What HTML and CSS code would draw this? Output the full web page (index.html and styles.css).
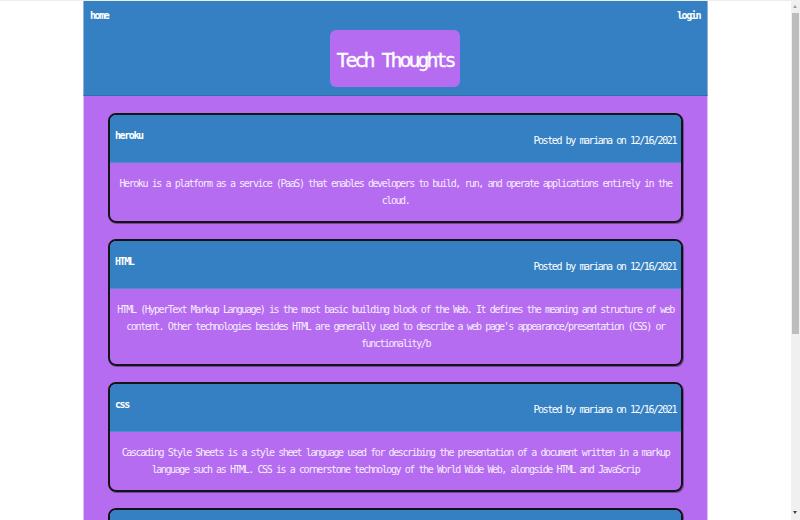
FILE: index.html
```html
<!DOCTYPE html>
<html lang="en">
<head>
<meta charset="utf-8">
<title>Tech Thoughts</title>
<link rel="stylesheet" href="styles.css">
</head>
<body>
<div class="page">
  <div class="container">
    <header class="site-header">
      <nav class="nav">
        <a class="nav-link" href="#">home</a>
        <a class="nav-link" href="#">login</a>
      </nav>
      <h1 class="site-title">Tech Thoughts</h1>
    </header>
    <main class="posts">
      <article class="post">
        <div class="post-head">
          <h2 class="post-title">heroku</h2>
          <p class="post-meta">Posted by mariana on 12/16/2021</p>
        </div>
        <p class="post-body">Heroku is a platform as a service (PaaS) that enables developers to build, run, and operate applications entirely in the cloud.</p>
      </article>
      <article class="post">
        <div class="post-head">
          <h2 class="post-title">HTML</h2>
          <p class="post-meta">Posted by mariana on 12/16/2021</p>
        </div>
        <p class="post-body">HTML (HyperText Markup Language) is the most basic building block of the Web. It defines the meaning and structure of web content. Other technologies besides HTML are generally used to describe a web page's appearance/presentation (CSS) or functionality/b</p>
      </article>
      <article class="post">
        <div class="post-head">
          <h2 class="post-title">css</h2>
          <p class="post-meta">Posted by mariana on 12/16/2021</p>
        </div>
        <p class="post-body">Cascading Style Sheets is a style sheet language used for describing the presentation of a document written in a markup language such as HTML. CSS is a cornerstone technology of the World Wide Web, alongside HTML and JavaScrip</p>
      </article>
      <article class="post">
        <div class="post-head">
          <h2 class="post-title">javascript</h2>
          <p class="post-meta">Posted by mariana on 12/16/2021</p>
        </div>
        <p class="post-body">JavaScript is a programming language that is one of the core technologies of the World Wide Web, alongside HTML and CSS.</p>
      </article>
    </main>
  </div>
</div>
<div class="scrollbar">
  <span class="arrow arrow-up"></span>
  <span class="thumb"></span>
  <span class="arrow arrow-down"></span>
</div>
</body>
</html>
```
FILE: styles.css
```css
html, body {
  margin: 0;
  padding: 0;
  height: 100%;
  overflow: hidden;
  background: #ffffff;
}

body {
  font-family: "DejaVu Sans Mono", "Liberation Mono", monospace;
  font-size: 10px;
  letter-spacing: -1.42px;
  color: #ffffff;
}

.page {
  width: 791px;
  border-top: 1px solid #ededed;
}

.container {
  width: 625px;
  margin: 0 auto;
}

.site-header {
  background: #3580c3;
  padding: 0 7px 8px 6px;
  border-bottom: 1px solid #2f6faa;
  border-left: 1px solid #8fb4dc;
  border-right: 1px solid #8fb4dc;
  text-align: center;
}

.nav {
  display: flex;
  justify-content: space-between;
  align-items: center;
  height: 28px;
}

.nav-link {
  color: #ffffff;
  text-decoration: none;
  font-weight: bold;
}

.site-title {
  display: inline-block;
  margin: 1px 0 0;
  padding: 2px 6px 0 6px;
  height: 55px;
  line-height: 57px;
  background: #b56cf0;
  border-radius: 6px;
  font-size: 20px;
  font-weight: normal;
  letter-spacing: -3.04px;
  color: #ffffff;
  -webkit-text-stroke: 0.3px #ffffff;
}

.posts {
  background: #b56cf0;
  padding: 17px 24px 40px;
  border-left: 1px solid #dcc0f8;
  border-right: 1px solid #dcc0f8;
  min-height: 600px;
}

.post {
  border: 2px solid #141414;
  border-radius: 8px;
  overflow: hidden;
  margin-bottom: 16px;
  box-shadow: 1px 1px 0 rgba(0, 0, 0, 0.35);
}

.post-head {
  display: flex;
  justify-content: space-between;
  align-items: flex-start;
  height: 48px;
  padding: 0 5px;
  background: #3580c3;
  border-bottom: 1px solid #4d8fd0;
  box-sizing: border-box;
}

.post-title {
  margin: 14px 0 0;
  font-size: 10px;
  line-height: 13px;
  font-weight: bold;
}

.post-meta {
  margin: 19px 0 0;
  line-height: 13px;
}

.post-body {
  margin: 0;
  padding: 12px 5px;
  line-height: 17px;
  text-align: center;
  color: #f6ecff;
}

.scrollbar {
  position: fixed;
  top: 0;
  right: 0;
  width: 9px;
  height: 100%;
  background: #f0f0f0;
}

.thumb {
  position: absolute;
  top: 13px;
  left: 1px;
  width: 7px;
  height: 321px;
  background: #bdbdbd;
}

.arrow {
  position: absolute;
  left: 2px;
  width: 0;
  height: 0;
  border-left: 2.5px solid transparent;
  border-right: 2.5px solid transparent;
}

.arrow-up {
  top: 5px;
  border-bottom: 3px solid #a0a0a0;
}

.arrow-down {
  bottom: 6px;
  border-top: 3px solid #404040;
}
```
